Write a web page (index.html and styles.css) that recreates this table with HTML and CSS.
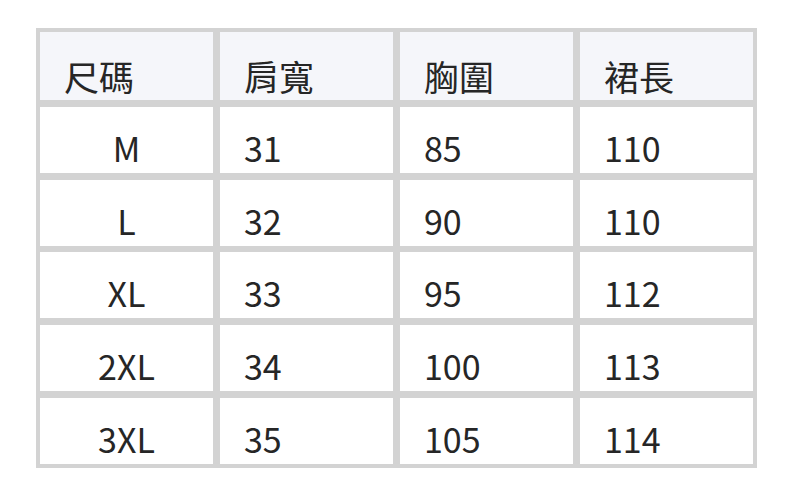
FILE: index.html
```html
<!DOCTYPE html>
<html lang="zh-Hant">
<head>
<meta charset="utf-8">
<title>尺碼表</title>
<link rel="stylesheet" href="styles.css">
</head>
<body>
<div class="size-table">
  <div class="cell head">尺碼</div>
  <div class="cell head">肩寬</div>
  <div class="cell head">胸圍</div>
  <div class="cell head">裙長</div>

  <div class="cell size">M</div>
  <div class="cell">31</div>
  <div class="cell">85</div>
  <div class="cell">110</div>

  <div class="cell size">L</div>
  <div class="cell">32</div>
  <div class="cell">90</div>
  <div class="cell">110</div>

  <div class="cell size">XL</div>
  <div class="cell">33</div>
  <div class="cell">95</div>
  <div class="cell">112</div>

  <div class="cell size">2XL</div>
  <div class="cell">34</div>
  <div class="cell">100</div>
  <div class="cell">113</div>

  <div class="cell size">3XL</div>
  <div class="cell">35</div>
  <div class="cell">105</div>
  <div class="cell">114</div>
</div>
</body>
</html>
```

FILE: styles.css
```css
html, body {
  margin: 0;
  padding: 0;
  background: #ffffff;
}

body {
  padding: 28px 0 0 36px;
  font-family: "Noto Sans CJK TC", "Noto Sans", sans-serif;
  color: #262626;
}

.size-table {
  width: 721px;
  box-sizing: border-box;
  display: grid;
  grid-template-columns: repeat(4, 173px);
  grid-template-rows: 68px repeat(5, 66px);
  column-gap: 7px;
  row-gap: 6.8px;
  padding: 4px;
  background: #d3d3d3;
}

.cell {
  background: #ffffff;
  font-size: 34px;
  line-height: 49px;
  display: flex;
  align-items: flex-end;
  padding: 0 24px 1px;
}

.head {
  background: #f5f6fa;
  font-size: 35px;
  padding-bottom: 0;
}

.size {
  justify-content: center;
}
```
